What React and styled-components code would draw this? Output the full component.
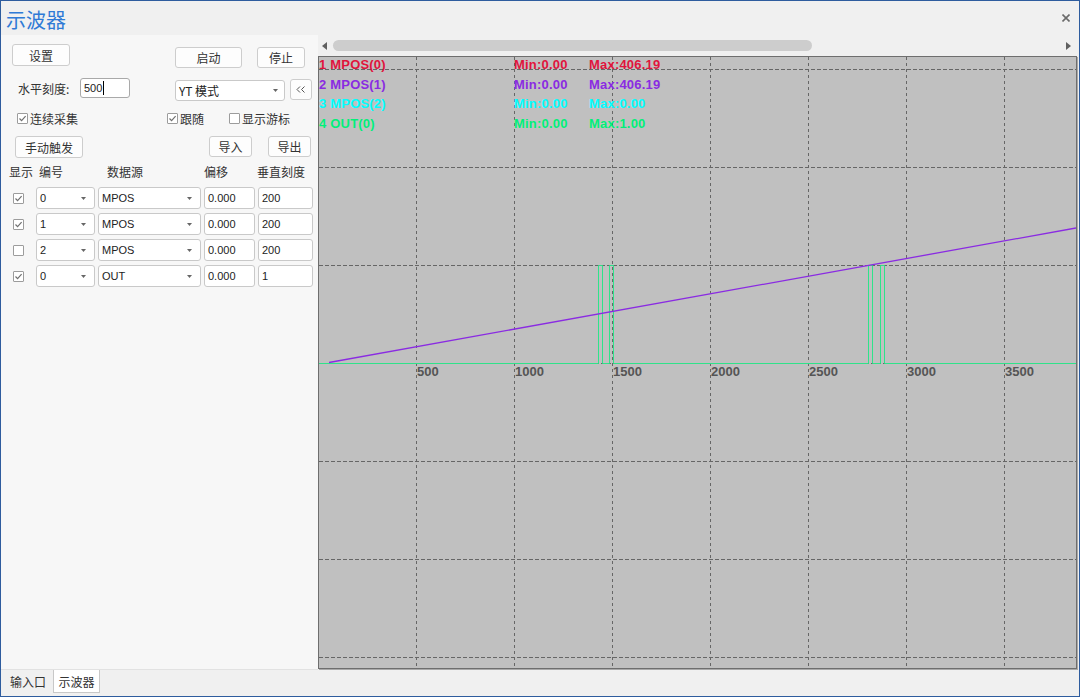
import React from 'react';
import styled, { createGlobalStyle } from 'styled-components';

const CN = `"Noto Sans CJK SC", "Liberation Sans", sans-serif`;
const LAT = `"Liberation Sans", "Noto Sans CJK SC", sans-serif`;

const GlobalStyle = createGlobalStyle`
  html, body { margin: 0; padding: 0; background: #f0f0f0; }
  body { font-family: ${CN}; color: #333; }
`;

const Window = styled.div`
  width: 1080px;
  height: 697px;
  box-sizing: border-box;
  border: 1px solid #2e5c9e;
  background: #f0f0f0;
  display: flex;
  flex-direction: column;
  overflow: hidden;
`;

const TitleBar = styled.div`
  height: 34px;
  flex: none;
  display: flex;
  align-items: center;
  justify-content: space-between;
  padding: 0 9px 0 5px;
`;

const Title = styled.div`
  font-family: ${CN};
  font-size: 20px;
  line-height: 1;
  color: #2f7ad6;
  margin-top: 4px;
`;

const Body = styled.div`
  flex: 1;
  min-height: 0;
  display: flex;
`;

const LeftPanel = styled.div`
  width: 317px;
  flex: none;
  background: #f7f7f7;
  border-bottom: 1px solid #e2e2e2;
  box-sizing: border-box;
  padding-top: 9px;
  display: flex;
  flex-direction: column;
`;

const Row = styled.div`
  display: flex;
  align-items: ${p => p.$align || 'flex-start'};
  margin-top: ${p => p.$top || 0}px;
  padding-left: ${p => p.$left || 0}px;
  height: ${p => (p.$h ? `${p.$h}px` : 'auto')};
`;

const Button = styled.div`
  box-sizing: border-box;
  width: ${p => p.$w}px;
  height: ${p => p.$h || 21}px;
  margin-left: ${p => p.$ml || 0}px;
  margin-top: ${p => p.$mt || 0}px;
  background: #fdfdfd;
  border: 1px solid #cdcdcd;
  border-radius: 3px;
  display: flex;
  align-items: center;
  justify-content: center;
  font-family: ${CN};
  font-size: 12px;
  color: #333;
`;

const Label = styled.div`
  width: ${p => p.$w}px;
  margin-top: ${p => p.$mt || 0}px;
  font-size: 12px;
  color: #333;
  font-family: ${CN};
`;

const TextBox = styled.div`
  box-sizing: border-box;
  width: ${p => p.$w}px;
  height: ${p => p.$h || 22}px;
  margin-left: ${p => p.$ml || 0}px;
  background: #fff;
  border: 1px solid ${p => (p.$focus ? '#a9a9a9' : '#c9c9c9')};
  border-radius: 3px;
  display: flex;
  align-items: center;
  padding-left: 3px;
  font-family: ${LAT};
  font-size: 11px;
  color: #222;
`;

const Caret = styled.span`
  display: inline-block;
  width: 1px;
  height: 14px;
  background: #000;
  margin-left: 1px;
`;

const SelectBox = styled.div`
  box-sizing: border-box;
  width: ${p => p.$w}px;
  height: ${p => p.$h || 22}px;
  margin-left: ${p => p.$ml || 0}px;
  margin-top: ${p => p.$mt || 0}px;
  background: #fff;
  border: 1px solid #c9c9c9;
  border-radius: 3px;
  display: flex;
  align-items: center;
  justify-content: space-between;
  padding: 0 ${p => p.$pr || 7}px 0 3px;
  font-family: ${p => (p.$cn ? CN : LAT)};
  font-size: ${p => (p.$cn ? 12 : 11)}px;
  color: #222;
`;

const CheckItem = styled.div`
  width: ${p => (p.$w ? `${p.$w}px` : 'auto')};
  display: flex;
  align-items: center;
  gap: 2px;
  font-family: ${CN};
  font-size: 12px;
  color: #333;
`;

const Box = styled.span`
  box-sizing: border-box;
  width: 11px;
  height: 11px;
  border: 1px solid #9c9c9c;
  border-radius: 1px;
  background: #fff;
  display: inline-flex;
  align-items: center;
  justify-content: center;
  margin-left: ${p => p.$ml || 0}px;
`;

const Grid = styled.div`
  display: grid;
  grid-template-columns: 24px 59px 103px 51px 55px;
  column-gap: 3px;
  row-gap: 4px;
  padding-left: 8px;
  margin-top: ${p => p.$top || 0}px;
  align-items: center;
`;

const HeadCell = styled.div`
  font-family: ${CN};
  font-size: 12px;
  color: #333;
  height: 16px;
  line-height: 16px;
  padding-left: ${p => p.$pl || 0}px;
  margin-left: ${p => p.$ml || 0}px;
`;

const Chevrons = styled.svg`
  display: block;
`;

const RightArea = styled.div`
  flex: 1;
  min-width: 0;
  display: flex;
  flex-direction: column;
`;

const ScrollRow = styled.div`
  height: 21px;
  flex: none;
  display: flex;
  align-items: center;
  padding: 0 8px 0 4px;
  gap: 6px;
`;

const Track = styled.div`
  flex: 1;
  height: 11px;
  display: flex;
`;

const Thumb = styled.div`
  width: ${p => p.$w}px;
  height: 11px;
  border-radius: 6px;
  background: #cdcdcd;
`;

const ChartBox = styled.div`
  width: 757px;
  height: 611px;
  flex: none;
  background: #c0c0c0;
  border: 1px solid #6e6e6e;
  box-shadow: 1px 1px 0 #a9a9a9;
  overflow: hidden;
`;

const ChartSvg = styled.svg`
  display: block;
`;

const TabBar = styled.div`
  height: 26px;
  flex: none;
  display: flex;
  align-items: flex-start;
  padding-left: 2px;
`;

const Tab = styled.div`
  box-sizing: border-box;
  width: ${p => p.$w}px;
  height: 23px;
  display: flex;
  align-items: center;
  justify-content: center;
  font-family: ${CN};
  font-size: 12px;
  color: #333;
  background: ${p => (p.$active ? '#fff' : 'transparent')};
  border: 1px solid ${p => (p.$active ? '#c8c8c8' : 'transparent')};
  border-top: none;
`;

const Tri = ({ dir = 'down', color = '#666' }) => {
  if (dir === 'left') {
    return (
      <svg width="5" height="8" viewBox="0 0 5 8"><path d="M5 0 L0 4 L5 8 Z" fill="#606060" /></svg>
    );
  }
  if (dir === 'right') {
    return (
      <svg width="5" height="8" viewBox="0 0 5 8"><path d="M0 0 L5 4 L0 8 Z" fill="#606060" /></svg>
    );
  }
  return (
    <svg width="5" height="3" viewBox="0 0 5 3"><path d="M0 0 L5 0 L2.5 3 Z" fill={color} /></svg>
  );
};

const Check = ({ checked, ml }) => (
  <Box $ml={ml}>
    {checked && (
      <svg width="9" height="9" viewBox="0 0 9 9">
        <path d="M1.5 4.5 L3.6 6.6 L7.6 2.2" fill="none" stroke="#707070" strokeWidth="1.2" />
      </svg>
    )}
  </Box>
);

const channels = [
  { on: true, id: '0', src: 'MPOS', off: '0.000', scale: '200' },
  { on: true, id: '1', src: 'MPOS', off: '0.000', scale: '200' },
  { on: false, id: '2', src: 'MPOS', off: '0.000', scale: '200' },
  { on: true, id: '0', src: 'OUT', off: '0.000', scale: '1' },
];

const legend = [
  { name: '1 MPOS(0)', min: 'Min:0.00', max: 'Max:406.19', color: '#e0143c' },
  { name: '2 MPOS(1)', min: 'Min:0.00', max: 'Max:406.19', color: '#8a2be2' },
  { name: '3 MPOS(2)', min: 'Min:0.00', max: 'Max:0.00', color: '#00ffff' },
  { name: '4 OUT(0)', min: 'Min:0.00', max: 'Max:1.00', color: '#00f07a' },
];

function Chart() {
  const vx = [0, 1, 2, 3, 4, 5, 6].map(i => 97.5 + i * 98);
  const hy = [0, 1, 2, 3, 4, 5, 6].map(i => 12.5 + i * 98);
  const ticks = ['500', '1000', '1500', '2000', '2500', '3000', '3500'];
  const base = 306.5;
  const top = 208.5;
  const pulses = [[279.5, 283.5], [290.5, 294.5], [549.5, 553.5], [561.5, 565.5]];
  let d = `M0 ${base}`;
  pulses.forEach(([a, b]) => {
    d += ` L${a} ${base} L${a} ${top} L${b} ${top} L${b} ${base}`;
  });
  d += ` L760 ${base}`;

  return (
    <ChartSvg width="757" height="611" viewBox="0 0 757 611">
      {hy.map(y => (
        <line key={`h${y}`} x1="0" x2="757" y1={y} y2={y} stroke="#666" strokeWidth="1" strokeDasharray="4 2" />
      ))}
      {vx.map(x => (
        <line key={`v${x}`} x1={x} x2={x} y1="0" y2="611" stroke="#666" strokeWidth="1" strokeDasharray="3 3" />
      ))}
      {ticks.map((t, i) => (
        <text key={t} x={98 + i * 98} y="318.5" fill="#555" fontFamily="Liberation Sans, sans-serif" fontWeight="bold" fontSize="13">
          {t}
        </text>
      ))}
      <path d={d} fill="none" stroke="#2fe38a" strokeWidth="1" />
      <line x1="10" y1="305.5" x2="757" y2="171" stroke="#8a2be2" strokeWidth="1.3" />
      {legend.map((l, i) => (
        <g key={l.name} fill={l.color} fontFamily="Liberation Sans, sans-serif" fontWeight="bold" fontSize="13" letterSpacing="0.2">
          <text x="0" y={12 + i * 19.7}>{l.name}</text>
          <text x="195" y={12 + i * 19.7}>{l.min}</text>
          <text x="270" y={12 + i * 19.7}>{l.max}</text>
        </g>
      ))}
    </ChartSvg>
  );
}

export default function App() {
  return (
    <Window>
      <GlobalStyle />
      <TitleBar>
        <Title>示波器</Title>
        <svg width="8" height="8" viewBox="0 0 8 8">
          <path d="M0.5 0.5 L7.5 7.5 M7.5 0.5 L0.5 7.5" stroke="#6a6a6a" strokeWidth="1.6" />
        </svg>
      </TitleBar>
      <Body>
        <LeftPanel>
          <Row $left={11}>
            <Button $w={58} $h={22}>设置</Button>
            <Button $w={67} $ml={105} $mt={3}>启动</Button>
            <Button $w={48} $ml={15} $mt={3}>停止</Button>
          </Row>
          <Row $left={17} $top={10}>
            <Label $w={62} $mt={2}>水平刻度:</Label>
            <TextBox $w={50} $h={20} $focus>500<Caret /></TextBox>
            <SelectBox $w={110} $h={21} $ml={45} $mt={2} $cn $pr={6}>
              <span>YT 模式</span>
              <Tri />
            </SelectBox>
            <Button $w={22} $ml={5} $mt={1}>
              <Chevrons width="10" height="7" viewBox="0 0 10 7">
                <path d="M4 0.5 L1 3.5 L4 6.5 M8.5 0.5 L5.5 3.5 L8.5 6.5" fill="none" stroke="#555" strokeWidth="1" />
              </Chevrons>
            </Button>
          </Row>
          <Row $left={16} $top={11} $h={13} $align="center">
            <CheckItem $w={150}><Check checked />连续采集</CheckItem>
            <CheckItem $w={62}><Check checked />跟随</CheckItem>
            <CheckItem><Check />显示游标</CheckItem>
          </Row>
          <Row $left={14} $top={11}>
            <Button $w={68} $h={22}>手动触发</Button>
            <Button $w={43} $ml={126}>导入</Button>
            <Button $w={43} $ml={16}>导出</Button>
          </Row>
          <Grid $top={6}>
            <HeadCell>显示</HeadCell>
            <HeadCell $pl={3}>编号</HeadCell>
            <HeadCell $pl={9}>数据源</HeadCell>
            <HeadCell>偏移</HeadCell>
            <HeadCell $ml={-1}>垂直刻度</HeadCell>
          </Grid>
          <Grid $top={7}>
            {channels.map((c, i) => (
              <React.Fragment key={i}>
                <Check checked={c.on} ml={4} />
                <SelectBox $w={59} $pr={8}>
                  <span>{c.id}</span>
                  <Tri />
                </SelectBox>
                <SelectBox $w={103} $pr={8}>
                  <span>{c.src}</span>
                  <Tri />
                </SelectBox>
                <TextBox $w={51}>{c.off}</TextBox>
                <TextBox $w={55}>{c.scale}</TextBox>
              </React.Fragment>
            ))}
          </Grid>
        </LeftPanel>
        <RightArea>
          <ScrollRow>
            <Tri dir="left" />
            <Track>
              <Thumb $w={479} />
            </Track>
            <Tri dir="right" />
          </ScrollRow>
          <ChartBox>
            <Chart />
          </ChartBox>
        </RightArea>
      </Body>
      <TabBar>
        <Tab $w={50}>输入口</Tab>
        <Tab $w={47} $active>示波器</Tab>
      </TabBar>
    </Window>
  );
}
